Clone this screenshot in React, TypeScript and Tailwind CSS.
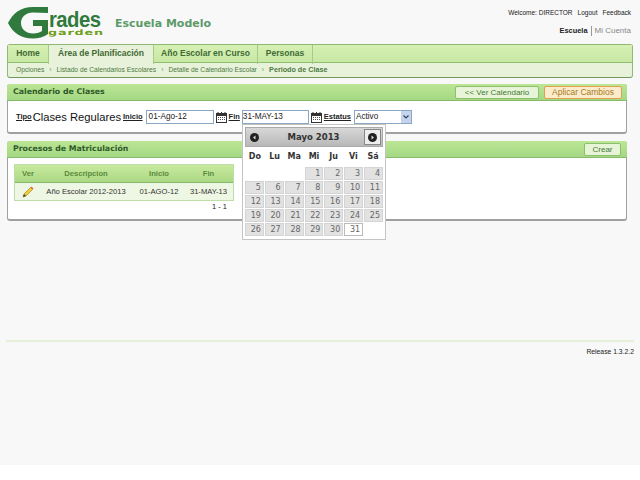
const arial = "font-['Liberation_Sans',Arial,sans-serif]";
const verdana = "font-['DejaVu_Sans',Verdana,sans-serif]";

const weeks = [
  [0, 0, 0, 1, 2, 3, 4],
  [5, 6, 7, 8, 9, 10, 11],
  [12, 13, 14, 15, 16, 17, 18],
  [19, 20, 21, 22, 23, 24, 25],
  [26, 27, 28, 29, 30, 31, 0],
];
const days = ["Do", "Lu", "Ma", "Mi", "Ju", "Vi", "Sá"];
const tabs = [
  { label: "Home", width: "w-[41px]" },
  { label: "Área de Planificación", width: "w-[105px] bg-[#e8f1d9]" },
  { label: "Año Escolar en Curso", width: "w-[104px]" },
  { label: "Personas", width: "w-[55px]" },
];
const crumbs = ["Opciones", "Listado de Calendarios Escolares", "Detalle de Calendario Escolar"];

function CalIcon() {
  return (
    <svg width="11" height="11" viewBox="0 0 11 11" className="shrink-0">
      <rect x="0.5" y="1.5" width="10" height="9" fill="#fff" stroke="#333" />
      <rect x="0" y="1" width="11" height="3" fill="#333" />
      <path d="M2 0v2M5.5 0v2M9 0v2" stroke="#333" />
      <path d="M2 5.5h1M4 5.5h1M6 5.5h1M8 5.5h1M2 7.5h1M4 7.5h1M6 7.5h1M8 7.5h1" stroke="#555" />
    </svg>
  );
}

function Logo() {
  return (
    <div className="relative w-[105px] h-[44px] shrink-0">
      <svg width="50" height="44" viewBox="0 0 50 44" className="absolute left-0 top-0">
        <path d="M8 23 C13 13 21 7 33 7 L48 7 L48 34 C44 37 38 38.5 33 38.5 C21 38.5 13 33 8 23 Z" fill="#2f7a3c" />
        <path d="M48 13 L33 12.5 C26 12.5 21 17 21 23 C21 29 26 33.5 33 33.5 C37 33.5 40 32.5 42 31 L42 26 L33 26 L33 20 L48 20 Z" fill="#f8f8f8" />
      </svg>
      <span className={`absolute left-[49px] top-[11px] text-[#2f7a3c] text-[22px] leading-[17px] font-bold scale-x-[0.92] origin-left tracking-tight ${arial}`}>
        rades
      </span>
      <span className={`absolute left-[48px] top-[29px] text-[#6f9e1a] text-[7.5px] leading-[7px] font-bold tracking-[0.5px] scale-x-[1.7] origin-left ${verdana}`}>
        garden
      </span>
    </div>
  );
}

function Field({ value, className }: { value: string; className?: string }) {
  return (
    <div className={`h-[14px] bg-white border border-[#8aa8c4] text-[8.2px] leading-[12px] text-[#222] ${className ?? ""}`}>
      {value}
    </div>
  );
}

function Label({ children }: { children: string }) {
  return <span className="block text-[7.5px] font-bold underline text-[#222] leading-[10px]">{children}</span>;
}

export default function App() {
  return (
    <div className={`relative w-[640px] h-[480px] bg-white overflow-hidden ${arial}`}>
      <div className="h-[465px] bg-[#f8f8f8] flex flex-col">
        {/* header */}
        <div className="h-[44px] flex pr-[9px] shrink-0">
          <Logo />
          <div className={`ml-[10px] mt-[16px] text-[11px] leading-[16px] font-bold text-[#5d9a6a] ${verdana}`}>
            Escuela Modelo
          </div>
          <div className="ml-auto flex flex-col items-end pt-[8px]">
            <div className="flex gap-[5px] text-[6.5px] leading-[9px] text-[#222]">
              <span>Welcome: DIRECTOR</span>
              <span>Logout</span>
              <span>Feedback</span>
            </div>
            <div className="flex mt-[9px] text-[8px] leading-[10px]">
              <span className="font-bold text-[7.4px] text-[#222] pr-[3px] border-r border-[#999]">Escuela</span>
              <span className="text-[#888] pl-[3px]">Mi Cuenta</span>
            </div>
          </div>
        </div>

        {/* nav */}
        <div className="mx-[7px] h-[34px] shrink-0 rounded-[3px] border border-[#8fb878] border-b-[#6f9a5c] bg-[#e8f1d9] flex flex-col">
          <div className="h-[18px] flex border-b border-[#8cc06c] bg-gradient-to-b from-[#d6f0b4] to-[#c8e8a4]">
            {tabs.map((t) => (
              <div
                key={t.label}
                className={`h-[19px] border-r border-[#a4cc88] text-[8.5px] leading-[17px] font-bold text-center whitespace-nowrap text-[#3f6a35] ${t.width}`}
              >
                {t.label}
              </div>
            ))}
          </div>
          <div className="flex-1 flex items-center pl-[8px] text-[6.7px] text-[#4d7a42] whitespace-nowrap">
            {crumbs.map((c) => (
              <span key={c} className="flex">
                {c}
                <span className="mx-[5px] text-[#6d9a5c]">›</span>
              </span>
            ))}
            <span className="font-bold text-[7.2px] text-[#4d7a42]">Periodo de Clase</span>
          </div>
        </div>

        {/* calendario panel */}
        <div className="ml-[7px] mr-[13px] mt-[6px] h-[50px] shrink-0 rounded-[3px] border border-[#a0a0a0] border-b-2 border-t-0 bg-white">
          <div className="h-[17px] -mx-px rounded-t-[3px] bg-gradient-to-b from-[#bce694] to-[#a4d884] border-b border-[#86bc68] flex items-center pl-[6px] pr-[5px]">
            <span className={`text-[7.8px] font-bold text-[#2f5a2a] ${verdana}`}>Calendario de Clases</span>
            <div className="ml-auto flex gap-[5px]">
              <div className="w-[84px] h-[13px] rounded-[2px] bg-[#e8f4d8] border border-[#8cc06c] text-[8px] leading-[11px] text-center text-[#3f7a35]">
                {"<< Ver Calendario"}
              </div>
              <div className="w-[78px] h-[13px] rounded-[2px] bg-[#fbeccd] border border-[#e0a050] text-[8.5px] leading-[11px] text-center text-[#a87a1a]">
                Aplicar Cambios
              </div>
            </div>
          </div>
          <div className="flex items-center pl-[8px] pt-[8px] h-[24px]">
            <Label>Tipo</Label>
            <span className="ml-[1px] text-[11.2px] leading-[14px] text-[#111]">Clases Regulares</span>
            <span className="ml-[2px]"><Label>Inicio</Label></span>
            <Field value="01-Ago-12" className="ml-[3px] w-[68px] pl-[2px]" />
            <span className="ml-[2px]"><CalIcon /></span>
            <span className="ml-[2px]"><Label>Fin</Label></span>
            <Field value="31-MAY-13" className="ml-[2px] w-[67px] pl-0" />
            <span className="ml-[2px]"><CalIcon /></span>
            <span className="ml-[2px]"><Label>Estatus</Label></span>
            <div className="ml-[3px] w-[58px] h-[14px] bg-white border border-[#8aa8c4] text-[8.2px] leading-[12px] text-[#222] pl-[1px] flex">
              <span>Activo</span>
              <span className="ml-auto w-[10px] bg-[#c4d4ec] flex items-center justify-center">
                <svg width="6" height="4" viewBox="0 0 6 4"><path d="M0.5 0.5L3 3L5.5 0.5" fill="none" stroke="#345" strokeWidth="1.2" /></svg>
              </span>
            </div>
          </div>
        </div>

        {/* procesos panel */}
        <div className="ml-[7px] mr-[13px] mt-[7px] h-[80px] shrink-0 rounded-[3px] border border-[#a0a0a0] border-b-2 border-t-0 bg-white">
          <div className="h-[17px] -mx-px rounded-t-[3px] bg-gradient-to-b from-[#bce694] to-[#a4d884] border-b border-[#86bc68] flex items-center pl-[6px] pr-[6px]">
            <span className={`text-[7.8px] font-bold text-[#2f5a2a] ${verdana}`}>Procesos de Matriculación</span>
            <div className="ml-auto w-[37px] h-[13px] rounded-[2px] bg-[#e8f4d8] border border-[#8cc06c] text-[8px] leading-[11px] text-center text-[#3f7a35]">
              Crear
            </div>
          </div>
          <div className="mt-[6px] ml-[6px] w-[220px] border border-[#c0dca8] text-[7.6px]">
            <div className="h-[18px] flex items-center font-bold text-[#5a8a3c] bg-gradient-to-b from-[#c8ea9e] to-[#acd884] border-b border-[#86bc68]">
              <span className="w-[26px] text-center">Ver</span>
              <span className="w-[90px] text-center">Descripcion</span>
              <span className="w-[56px] text-center">Inicio</span>
              <span className="w-[43px] text-center">Fin</span>
            </div>
            <div className="h-[17px] flex items-center text-[#333] bg-[#eef7e4]">
              <span className="w-[26px] flex justify-center">
                <svg width="12" height="12" viewBox="0 0 12 12">
                  <path d="M1 11L2 8L8.5 1.5L10.5 3.5L4 10Z" fill="#f2cc3a" stroke="#a88a1a" strokeWidth="0.7" />
                  <path d="M8.5 1.5L10.5 3.5L11.5 2.5L9.5 0.5Z" fill="#e06a50" />
                  <path d="M1 11L2 8L4 10Z" fill="#444" />
                </svg>
              </span>
              <span className="w-[90px] text-center whitespace-nowrap">Año Escolar 2012-2013</span>
              <span className="w-[56px] text-center">01-AGO-12</span>
              <span className="w-[43px] text-center whitespace-nowrap">31-MAY-13</span>
            </div>
          </div>
          <div className="w-[220px] ml-[6px] mt-[1px] pr-[7px] text-right text-[7.5px] leading-[9px] text-[#222]">1 - 1</div>
        </div>

        {/* footer */}
        <div className="mx-[6px] mt-[119px] h-[2px] shrink-0 bg-[#e6f1dc]" />
        <div className="mr-[6px] mt-[5px] text-right text-[6.8px] leading-[9px] text-[#222]">Release 1.3.2.2</div>
      </div>

      {/* date picker */}
      <div className={`absolute left-[242px] top-[124px] w-[144px] h-[116px] bg-white border border-[#c4c4c4] p-[2px] ${verdana}`}>
        <div className="h-[20px] bg-gradient-to-b from-[#d8d8d8] to-[#b8b8b8] border border-[#aaa] flex items-center justify-between text-[8.5px] font-bold text-[#333] pl-[4px] pr-[1px]">
          <span className="w-[9px] h-[9px] rounded-full bg-[#222] flex items-center justify-center">
            <svg width="5" height="5" viewBox="0 0 5 5"><path d="M3.5 0.5L1 2.5L3.5 4.5Z" fill="#ddd" /></svg>
          </span>
          <span className="ml-[4px]">Mayo 2013</span>
          <span className="w-[17px] h-[16px] bg-[#eee] border border-[#888] flex items-center justify-center">
            <span className="w-[9px] h-[9px] rounded-full bg-[#222] flex items-center justify-center">
              <svg width="5" height="5" viewBox="0 0 5 5"><path d="M1.5 0.5L4 2.5L1.5 4.5Z" fill="#ddd" /></svg>
            </span>
          </span>
        </div>
        <div className="grid grid-cols-7 h-[19px] items-center text-center text-[8px] font-bold text-[#333]">
          {days.map((d) => (
            <span key={d}>{d}</span>
          ))}
        </div>
        <div className="mt-[1px] flex flex-col gap-[1px]">
          {weeks.map((w, i) => (
            <div key={i} className="grid grid-cols-7 gap-[1px]">
              {w.map((n, j) =>
                n === 0 ? (
                  <span key={j} className="h-[13px]" />
                ) : (
                  <span
                    key={j}
                    className={`h-[13px] pr-[2px] text-right text-[8px] leading-[12px] border text-[#666] ${
                      n === 31 ? "bg-white border-[#bbb] text-[#333]" : "bg-[#e2e2e2] border-[#d4d4d4]"
                    }`}
                  >
                    {n}
                  </span>
                )
              )}
            </div>
          ))}
        </div>
      </div>
    </div>
  );
}
